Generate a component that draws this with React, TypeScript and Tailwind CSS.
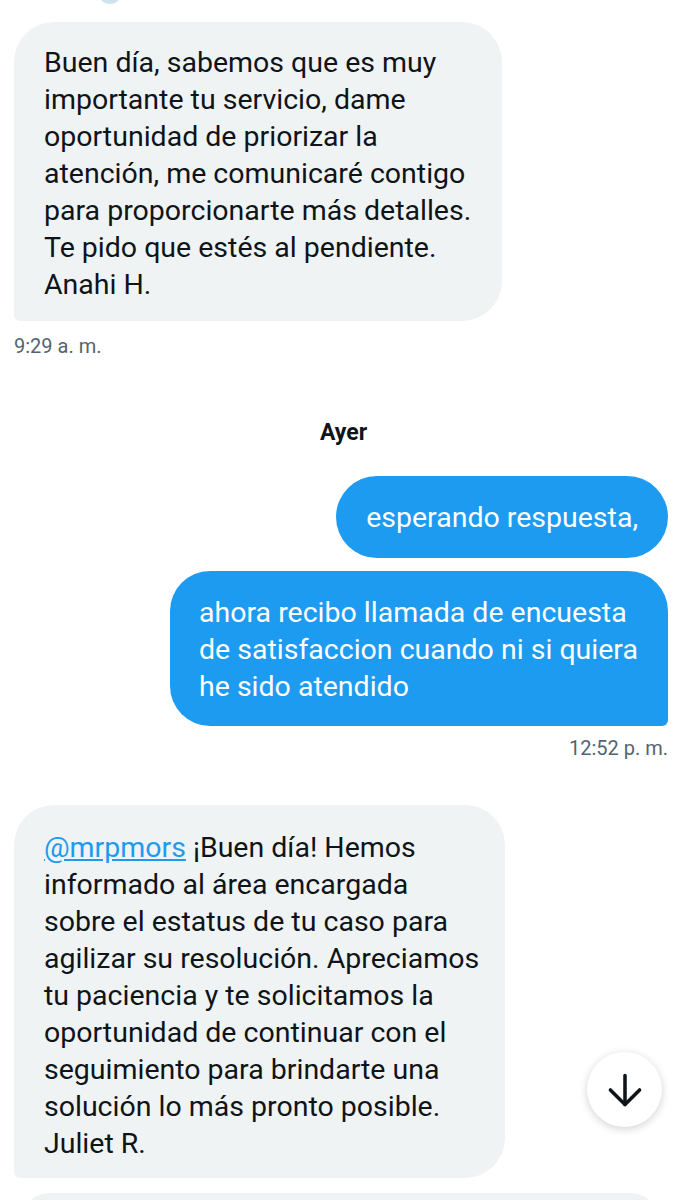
import { ArrowDown } from 'lucide-react';

type Msg = {
    id: string;
    lines: React.ReactNode[];
};

const anahi: Msg = {
    id: 'anahi',
    lines: [
        'Buen día, sabemos que es muy',
        'importante tu servicio, dame',
        'oportunidad de priorizar la',
        'atención, me comunicaré contigo',
        'para proporcionarte más detalles.',
        'Te pido que estés al pendiente.',
        'Anahi H.',
    ],
};

const juliet: Msg = {
    id: 'juliet',
    lines: [
        <>
            <span className="text-[#1d9bf0] underline underline-offset-2">@mrpmors</span> ¡Buen día! Hemos
        </>,
        'informado al área encargada',
        'sobre el estatus de tu caso para',
        'agilizar su resolución. Apreciamos',
        'tu paciencia y te solicitamos la',
        'oportunidad de continuar con el',
        'seguimiento para brindarte una',
        'solución lo más pronto posible.',
        'Juliet R.',
    ],
};

function Lines({ lines }: { lines: React.ReactNode[] }) {
    return (
        <>
            {lines.map((l, i) => (
                <div key={i} className="whitespace-nowrap">{l}</div>
            ))}
        </>
    );
}

export default function App() {
    return (
        <div
            className="relative w-[685px] h-[1200px] overflow-hidden bg-white text-[#0f1419]"
            style={{ fontFamily: 'Roboto, "Noto Sans", sans-serif' }}
        >
            {/* peeking avatar edge */}
            <div className="absolute left-[98px] top-[-20px] w-[24px] h-[24px] rounded-full bg-[#cfe3ee]" />

            <div className="flex flex-col pt-[22px]">
                {/* received */}
                <div className="ml-[14px] w-[488px] rounded-[40px] rounded-bl-[6px] bg-[#eff3f4] pl-[30px] pt-[22px] pb-[18px] text-[28.5px] leading-[37px]">
                    <Lines lines={anahi.lines} />
                </div>
                <div className="ml-[14px] mt-[13px] text-[20px] leading-[24px] text-[#536471]">9:29 a. m.</div>

                <div className="mt-[62px] text-center pl-[2px] text-[23px] leading-[26px] font-bold text-[#0f1419]">Ayer</div>

                {/* sent */}
                <div className="mt-[30px] flex flex-col items-end pr-[17px] gap-[13px]">
                    <div className="rounded-full bg-[#1d9bf0] px-[30px] pt-[23px] pb-[22px] text-[28.5px] leading-[37px] text-white">
                        esperando respuesta,
                    </div>
                    <div className="w-[498px] rounded-[40px] rounded-br-[6px] bg-[#1d9bf0] pl-[29px] pt-[23px] pb-[21px] text-[28.5px] leading-[37px] text-white">
                        <Lines lines={[
                            'ahora recibo llamada de encuesta',
                            'de satisfaccion cuando ni si quiera',
                            'he sido atendido',
                        ]} />
                    </div>
                </div>
                <div className="mt-[10px] pr-[17px] text-right text-[20px] leading-[24px] text-[#536471]">12:52 p. m.</div>

                {/* received */}
                <div className="mt-[45px] ml-[14px] w-[491px] rounded-[40px] rounded-bl-[6px] bg-[#eff3f4] pl-[30px] pt-[24px] pb-[16px] text-[28.5px] leading-[37px]">
                    <Lines lines={juliet.lines} />
                </div>

                <div className="mt-[15px] ml-[20px] w-[640px] h-[60px] rounded-[40px] bg-[#eff3f4]" />
            </div>

            {/* scroll to bottom */}
            <div className="absolute left-[587px] top-[1052px] w-[75px] h-[75px] rounded-full bg-white shadow-[0_2px_8px_rgba(0,0,0,0.18)] flex items-center justify-center">
                <ArrowDown size={50} strokeWidth={1.7} className="text-[#0f1419]" />
            </div>
        </div>
    );
}
